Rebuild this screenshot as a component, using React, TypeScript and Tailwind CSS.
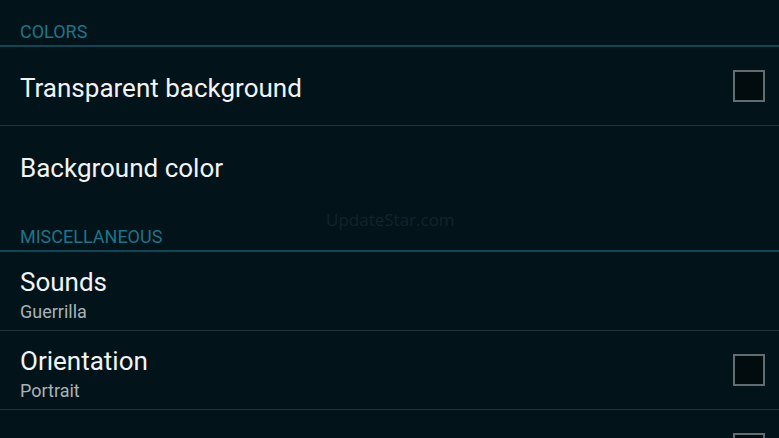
import { ReactNode } from 'react'

const font = { fontFamily: 'Roboto, "Noto Sans", sans-serif' }

function Header({ children }: { children: ReactNode }) {
  return (
    <div className="border-b-2 border-[#0d4654]">
      <div className="h-[45px] flex items-end pb-[4px] pl-5 text-[18px] leading-none text-[#1c7588] uppercase">
        {children}
      </div>
    </div>
  )
}

function Checkbox() {
  return <div className="w-[32px] h-[32px] border-2 border-[#636d71] bg-[#020b0e] shrink-0" />
}

function Row({
  title,
  summary,
  checkbox,
  divider = true,
}: {
  title?: string
  summary?: string
  checkbox?: boolean
  divider?: boolean
}) {
  return (
    <div className={`h-[79px] flex items-center pl-5 pr-[14px] ${divider ? 'border-b border-[#24343a]' : ''}`}>
      <div className={`flex-1 flex flex-col ${summary ? 'pt-[8px]' : 'pt-[4px]'}`}>
        {title && <div className="text-[26px] leading-[30px] text-[#f2f4f4]">{title}</div>}
        {summary && <div className="text-[18px] leading-[24px] mt-[3px] text-[#a9b3b7]">{summary}</div>}
      </div>
      {checkbox && <Checkbox />}
    </div>
  )
}

export default function App() {
  return (
    <div className="relative w-[779px] h-[438px] overflow-hidden bg-[#03131a]" style={font}>
      <Header>Colors</Header>
      <Row title="Transparent background" checkbox />
      <Row title="Background color" divider={false} />
      <Header>Miscellaneous</Header>
      <Row title="Sounds" summary="Guerrilla" />
      <Row title="Orientation" summary="Portrait" checkbox />
      <Row checkbox />
      <div className="absolute left-[326px] top-[207px] text-[17px] text-[#13232a]" style={{ fontFamily: '"Open Sans", sans-serif' }}>
        UpdateStar.com
      </div>
    </div>
  )
}
